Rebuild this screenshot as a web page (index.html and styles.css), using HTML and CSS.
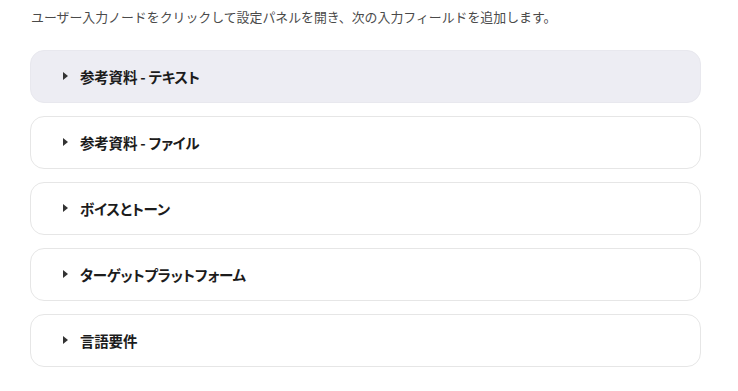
FILE: index.html
```html
<!DOCTYPE html>
<html lang="ja">

<head>
          <meta charset="UTF-8">
          <meta name="viewport" content="width=device-width, initial-scale=1.0">
          <title>入力フィールド</title>
          <link rel="stylesheet" href="styles.css">
</head>

<body>
          <div class="content">
                    <p class="intro">ユーザー入力ノードをクリックして設定パネルを開き、次の入力フィールドを追加します。</p>

                    <div class="list">
                              <details class="item active">
                                        <summary><span class="arrow"></span>参考資料 - テキスト</summary>
                              </details>
                              <details class="item">
                                        <summary><span class="arrow"></span>参考資料 - ファイル</summary>
                              </details>
                              <details class="item">
                                        <summary><span class="arrow"></span>ボイスとトーン</summary>
                              </details>
                              <details class="item">
                                        <summary><span class="arrow"></span>ターゲットプラットフォーム</summary>
                              </details>
                              <details class="item">
                                        <summary><span class="arrow"></span>言語要件</summary>
                              </details>
                    </div>
          </div>
</body>

</html>
```

FILE: styles.css
```css
* {
          padding: 0;
          margin: 0;
          box-sizing: border-box;
}

body {
          background: #ffffff;
          font-family: "Noto Sans CJK JP", "Noto Sans", sans-serif;
          color: #1f1f1f;
}

.content {
          width: 671px;
          margin-left: 30px;
}

.intro {
          font-size: 12.9px;
          line-height: 20px;
          color: #4a4a4a;
          padding: 7px 0 0 1px;
          height: 50px;
}

.list {
          display: flex;
          flex-direction: column;
          gap: 13px;
}

.item {
          border: 1px solid #e6e6e6;
          border-radius: 14px;
          height: 53px;
          background: #ffffff;
}

.item.active {
          background: #ededf3;
          border-color: #e8e8ee;
}

.item summary {
          list-style: none;
          display: flex;
          align-items: center;
          height: 50px;
          padding-left: 32px;
          font-size: 14.5px;
          font-weight: bold;
          font-feature-settings: "palt";
          letter-spacing: -0.2px;
          color: #1c1c1c;
          cursor: pointer;
}

.item summary::-webkit-details-marker {
          display: none;
}

.arrow {
          width: 0;
          height: 0;
          border-top: 4px solid transparent;
          border-bottom: 4px solid transparent;
          border-left: 5px solid #333333;
          margin-right: 12px;
}
```
